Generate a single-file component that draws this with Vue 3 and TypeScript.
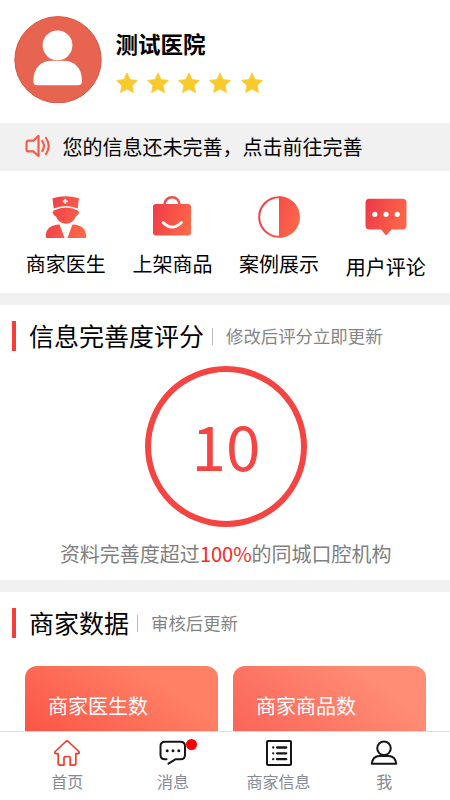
<script setup lang="ts">
interface Entry {
  icon: 'doctor' | 'bag' | 'contrast' | 'comment'
  label: string
}
interface Tab {
  icon: 'home' | 'message' | 'list' | 'user'
  label: string
  active?: boolean
  dot?: boolean
}

const entries: Entry[] = [
  { icon: 'doctor', label: '商家医生' },
  { icon: 'bag', label: '上架商品' },
  { icon: 'contrast', label: '案例展示' },
  { icon: 'comment', label: '用户评论' },
]

const stats: string[] = ['商家医生数', '商家商品数']

const tabs: Tab[] = [
  { icon: 'home', label: '首页', active: true },
  { icon: 'message', label: '消息', dot: true },
  { icon: 'list', label: '商家信息' },
  { icon: 'user', label: '我' },
]
</script>

<template>
  <div class="page">
    <svg class="defs" width="0" height="0" aria-hidden="true">
      <defs>
        <linearGradient id="warm" gradientUnits="userSpaceOnUse" x1="0" y1="14" x2="42" y2="28">
          <stop offset="0" stop-color="#ee3b48" />
          <stop offset="1" stop-color="#ff6a48" />
        </linearGradient>
      </defs>
    </svg>

    <main class="content">
      <header class="profile">
        <svg class="avatar" viewBox="0 0 88 88">
          <circle cx="44" cy="44" r="43.4" fill="#e66450" stroke="#dc5240" stroke-width="1" />
          <circle cx="43.5" cy="29.5" r="15" fill="#fff" />
          <path d="M19.3 66V64.5C19.3 52 27.5 45 37.5 45H49.5C60 45 68 52 68 64.500V66Q68 69.600 64 69.600H23.300Q19.300 69.600 19.300 66Z" fill="#fff" />
        </svg>
        <div class="who">
          <h1 class="name">测试医院</h1>
          <div class="stars">
            <svg v-for="n in 5" :key="n" class="star" viewBox="0 0 22 22">
              <path d="M11 .8 14.100 7.500 21.500 8.400 16.100 13.400 17.500 20.700 11 17.100 4.500 20.700 5.900 13.400 .5 8.400 7.900 7.500Z" fill="#f9ca2e" stroke="#f9ca2e" stroke-width=".7" stroke-linejoin="round" />
            </svg>
          </div>
        </div>
      </header>

      <div class="notice">
        <svg class="speaker" viewBox="0 0 26 24" fill="none" stroke="#fa5a46" stroke-width="2.200" stroke-linecap="round" stroke-linejoin="round">
          <path d="M13.500 1.800V22L8.300 17.400H3.600Q1.500 17.400 1.500 15.300V8.800Q1.500 6.700 3.600 6.700H8.300Z" />
          <path d="M17.300 7Q20.700 12 17.300 17M21 4Q26.500 12 21 20" />
        </svg>
        <span>您的信息还未完善，点击前往完善</span>
      </div>

      <nav class="entries">
        <a v-for="entry in entries" :key="entry.icon" class="entry" :class="entry.icon">
          <svg v-if="entry.icon === 'doctor'" class="entry-icon" viewBox="0 0 42 42" fill="url(#warm)">
            <path d="M7.500 2.300Q21-1.700 34 2.300L32.700 12.500Q21 7.400 8.700 12.500Z" />
            <path d="M9 14.500Q21 8.600 33 14.500L34.200 16.500Q33 19.500 30.800 20.500C28.500 25.500 25 27.700 21 27.700S13.200 25.500 11 20.500Q8.500 19.500 7.500 16.500Z" />
            <path d="M14.500 28.600 19.600 42H2.200Q.7 42 .7 40.500C.7 33.500 5.500 28.700 14.500 28.600ZM27.500 28.600 22.400 42H39.800Q41.300 42 41.300 40.500C41.300 33.500 36.500 28.700 27.500 28.600Z" />
            <path d="M20.300 2.800V8M17.700 5.400H22.900" fill="none" stroke="#fff" stroke-width="1.700" />
          </svg>
          <svg v-else-if="entry.icon === 'bag'" class="entry-icon" viewBox="0 0 42 42">
            <path d="M13.500 10V8.500A7.500 7.200 0 0 1 28.500 8.500V10" fill="none" stroke="url(#warm)" stroke-width="2.600" />
            <rect x="2" y="8" width="38" height="31.500" rx="3" fill="url(#warm)" />
            <path d="M12 26.500Q21 35.700 30.500 26.500" fill="none" stroke="#fff" stroke-width="2.700" stroke-linecap="round" />
          </svg>
          <svg v-else-if="entry.icon === 'contrast'" class="entry-icon" viewBox="0 0 42 42">
            <circle cx="21" cy="21" r="19.800" fill="#fff" stroke="url(#warm)" stroke-width="2" />
            <path d="M21 .3A20.700 20.700 0 0 1 21 41.700Z" fill="url(#warm)" />
          </svg>
          <svg v-else class="entry-icon" viewBox="0 0 42 42">
            <path d="M4.500 2.700H37.500Q41.500 2.700 41.500 6.700V29.500Q41.500 33.500 37.500 33.500H26.500L21 39.500 16 33.500H4.500Q.5 33.500 .5 29.500V6.700Q.5 2.700 4.500 2.700Z" fill="url(#warm)" />
            <g fill="#fff">
              <circle cx="9.800" cy="18.300" r="2.600" />
              <circle cx="21" cy="18.300" r="2.600" />
              <circle cx="32.300" cy="18.300" r="2.600" />
            </g>
          </svg>
          <span>{{ entry.label }}</span>
        </a>
      </nav>

      <section class="score-section">
        <div class="heading">
          <h2>信息完善度评分</h2>
          <small>修改后评分立即更新</small>
        </div>
        <div class="ring">10</div>
        <p class="summary">资料完善度超过<em>100%</em>的同城口腔机构</p>
      </section>

      <section class="data-section">
        <div class="heading">
          <h2>商家数据</h2>
          <small>审核后更新</small>
        </div>
        <div class="cards">
          <div v-for="label in stats" :key="label" class="card">{{ label }}</div>
        </div>
      </section>
    </main>

    <footer class="tabbar">
      <a v-for="tab in tabs" :key="tab.icon" class="tab" :class="{ active: tab.active }">
        <span class="tab-icon">
          <svg v-if="tab.icon === 'home'" viewBox="0 0 28 28" fill="none" stroke="currentColor" stroke-width="1.700" stroke-linejoin="round">
            <path d="M12.800 2.500Q14 1.500 15.200 2.500L25.800 12.500Q27 14.500 25 14.600H22.800V24.300Q22.800 26.100 21 26.100H17.200V18.800Q17.200 17.500 16 17.500H12.300Q11 17.500 11 18.800V26.100H7Q5.200 26.100 5.200 24.300V14.600H3Q1 14.500 2.200 12.500Z" />
          </svg>
          <svg v-else-if="tab.icon === 'message'" viewBox="0 0 28 28" fill="none" stroke="currentColor" stroke-width="2" stroke-linecap="round" stroke-linejoin="round">
            <path d="M7.500 20.300H6Q1.500 20.300 1.500 15.800V7.300Q1.500 2.800 6 2.800H21.500Q26 2.800 26 7.300V15.800Q26 20.300 21.500 20.300H16.300L9.500 24.600" />
            <path d="M8.200 11.700h.01M14 11.700h.01M19.800 11.700h.01" stroke-width="3" />
          </svg>
          <svg v-else-if="tab.icon === 'list'" viewBox="0 0 28 28" fill="none" stroke="currentColor" stroke-width="2" stroke-linecap="round">
            <rect x="2" y="2" width="24" height="24" rx="1" />
            <path d="M12 8.500H21.200M12 14.300H21.200M12 20.200H21.200M8.200 8.500h.01M8.200 14.300h.01M8.200 20.200h.01" stroke-width="2.300" />
          </svg>
          <svg v-else viewBox="0 0 28 28" fill="none" stroke="currentColor" stroke-width="2" stroke-linejoin="round">
            <circle cx="14" cy="9.300" r="6.800" />
            <path d="M1.800 24.800C2.300 19.500 5.500 16.900 9.600 16.900H18.400C22.500 16.900 25.700 19.500 26.200 24.800Z" />
          </svg>
          <i v-if="tab.dot" class="dot"></i>
        </span>
        <span class="tab-label">{{ tab.label }}</span>
      </a>
    </footer>
  </div>
</template>

<style>
body {
  margin: 0;
  background: #fff;
}
</style>

<style scoped>
.page {
  display: flex;
  flex-direction: column;
  width: 450px;
  height: 800px;
  overflow: hidden;
  background: #fff;
  color: #000;
  font-family: "Noto Sans CJK SC", sans-serif;
}
.defs {
  position: absolute;
}
.content {
  flex: 1;
  min-height: 0;
  overflow: hidden;
}
.profile {
  display: flex;
  gap: 14px;
  box-sizing: border-box;
  height: 122.500px;
  padding: 15.500px 13.500px 0;
}
.avatar {
  width: 88px;
  height: 87.500px;
}
.name {
  margin: 12px 0 0;
  font-size: 22.5px;
  line-height: 30px;
  font-weight: 700;
}
.stars {
  display: flex;
  gap: 9.300px;
  margin-top: 14.500px;
}
.star {
  width: 22px;
  height: 22px;
}
.notice {
  display: flex;
  align-items: center;
  gap: 11.500px;
  box-sizing: border-box;
  height: 48.500px;
  padding: 0 25px;
  background: #f1f1f1;
  font-size: 20px;
  line-height: 30px;
}
.speaker {
  width: 26px;
  height: 24px;
  margin-top: -2px;
}
.entries {
  display: flex;
  box-sizing: border-box;
  height: 122px;
  padding: 25px 11px 0 12.500px;
}
.entry {
  display: flex;
  flex: 1;
  flex-direction: column;
  align-items: center;
  font-size: 20px;
  line-height: 30px;
}
.entry-icon {
  width: 42px;
  height: 42px;
  margin-bottom: 11px;
}
.entry.comment .entry-icon {
  margin-bottom: 14px;
}
.score-section,
.data-section {
  border-top: 12px solid #f1f1f1;
}
.score-section {
  height: 275px;
}
.heading {
  display: flex;
  align-items: center;
  height: 30px;
  margin: 16px 0 0 12px;
  padding-left: 13px;
  border-left: 4px solid #f43e3c;
}
.heading h2 {
  margin: -2px 0 0;
  font-size: 25px;
  line-height: 30px;
  font-weight: 400;
}
.heading small {
  display: flex;
  align-items: center;
  margin-left: 8px;
  color: #858585;
  font-size: 17.400px;
  line-height: 30px;
}
.heading small::before {
  width: 1px;
  height: 17px;
  margin-right: 13px;
  background: #bbb;
  content: "";
}
.ring {
  display: flex;
  align-items: center;
  justify-content: center;
  box-sizing: border-box;
  width: 162px;
  height: 161px;
  margin: 15px 143px 0 145px;
  padding-bottom: 5px;
  border: 6px solid #f54542;
  border-radius: 50%;
  color: #f54542;
  font-size: 62px;
  line-height: 90px;
}
.summary {
  margin: 12px 0 0 1.500px;
  color: #808080;
  font-size: 20px;
  line-height: 30px;
  text-align: center;
}
.summary em {
  color: #fa2626;
  font-style: normal;
}
.cards {
  display: flex;
  gap: 15px;
  padding: 28px 24px 0 25px;
}
.card {
  box-sizing: border-box;
  flex: 1;
  height: 120px;
  padding: 25px 23px 0;
  border-radius: 12px;
  background: linear-gradient(35deg, #f9443c 0%, #ff8064 78%);
  color: #fff;
  font-size: 20px;
  line-height: 30px;
}
.card + .card {
  background: linear-gradient(40deg, #f9584f 0%, #ff8c74 80%);
}
.tabbar {
  display: flex;
  box-sizing: border-box;
  height: 69px;
  padding: 7px 13px 0 14.500px;
  border-top: 1px solid #dedede;
  background: #fff;
}
.tab {
  display: flex;
  flex: 1;
  flex-direction: column;
  align-items: center;
  color: #161616;
}
.tab.active {
  color: #f5392b;
}
.tab-icon {
  position: relative;
  height: 28px;
}
.tab-icon svg {
  display: block;
  width: 28px;
  height: 28px;
}
.dot {
  position: absolute;
  top: 0;
  left: 27px;
  width: 11px;
  height: 11px;
  border-radius: 50%;
  background: #fc0000;
}
.tab-label {
  margin-top: 2px;
  color: #858998;
  font-size: 16px;
  line-height: 24px;
}
</style>
